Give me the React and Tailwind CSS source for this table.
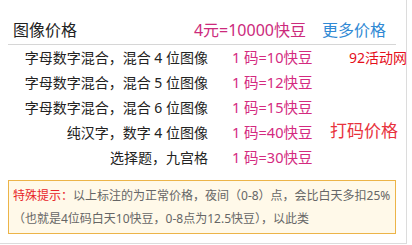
export default function App() {
  const rows = [
    ["字母数字混合，混合 4 位图像", "1 码=10快豆"],
    ["字母数字混合，混合 5 位图像", "1 码=12快豆"],
    ["字母数字混合，混合 6 位图像", "1 码=15快豆"],
    ["纯汉字，数字 4 位图像", "1 码=40快豆"],
    ["选择题，九宫格", "1 码=30快豆"],
  ];
  return (
    <div
      className="w-[407px] h-[244px] bg-white border-r border-b border-[#dcdcdc] pl-[8px]"
      style={{ fontFamily: '"Noto Sans", "Noto Sans CJK SC", sans-serif' }}
    >
      <div className="w-[388px] h-[45px] pt-[16px] flex items-center border-b border-[#d6d6d6]">
        <span className="pl-[5px] text-[16px] text-[#222]">图像价格</span>
        <span className="ml-auto text-[16px] text-[#cc2a7c]">4元=10000快豆</span>
        <span className="ml-[16px] mr-[10px] text-[16px] text-[#3089d4]">更多价格</span>
      </div>
      <div className="flex flex-col">
        {rows.map(([a, b], i) => (
          <div key={i} className="h-[25px] flex items-center whitespace-nowrap">
            <div className="w-[200px] shrink-0 text-right text-[14px] text-[#222] whitespace-pre">{a}</div>
            <div className="ml-[24px] w-[98px] shrink-0 text-[14.5px] text-[#d42a80]">{b}</div>
            {i === 0 && (
              <div className="ml-[19px] shrink-0 text-[14px] text-[#e50f1c]">92活动网</div>
            )}
            {i === 3 && (
              <div className="-mt-[3px] shrink-0 text-[17px] text-[#e8333d]">打码价格</div>
            )}
          </div>
        ))}
      </div>
      <div className="mt-[10px] w-[388px] h-[54px] border border-[#ecb448] bg-[#fff9e9] pl-[4px] pt-[3px] text-[12px] leading-[23px] text-[#666]">
        <div className="whitespace-nowrap">
          <span className="text-[#e8262a]">特殊提示：</span>以上标注的为正常价格，夜间（0-8）点，会比白天多扣25%
        </div>
        <div className="whitespace-nowrap">（也就是4位码白天10快豆，0-8点为12.5快豆），以此类</div>
      </div>
    </div>
  );
}
